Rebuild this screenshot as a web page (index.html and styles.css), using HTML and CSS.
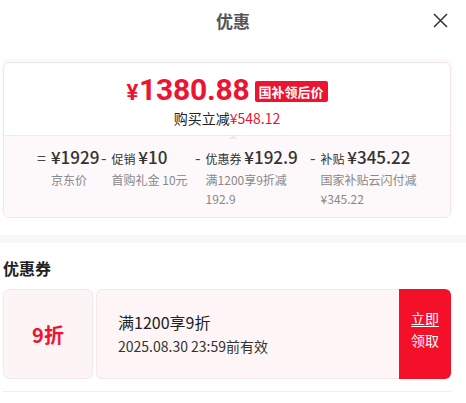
FILE: index.html
```html
<!DOCTYPE html>
<html lang="zh-CN">
  <head>
    <meta charset="UTF-8" />
    <meta name="viewport" content="width=device-width, initial-scale=1.0" />
    <title>优惠</title>
    <link rel="stylesheet" href="styles.css">
  </head>
  <body>
    <div class="header">
      <span></span>
      <h1 class="title">优惠</h1>
      <a href="javascript:;" class="close">
        <svg width="15" height="15" viewBox="0 0 15 15">
          <path d="M1 1 L14 14 M14 1 L1 14" stroke="#333" stroke-width="1.5" fill="none" />
        </svg>
      </a>
    </div>

    <div class="summary">
      <div class="card">
        <div class="card-top">
          <div class="price-row">
            <span class="price"><em>¥</em>1380.88</span>
            <span class="tag">国补领后价</span>
          </div>
          <p class="save">购买立减<span>¥548.12</span></p>
        </div>

        <div class="card-bottom">
          <div class="item">
            <span class="sign">=</span>
            <p class="head"><b>¥1929</b></p>
            <p class="sub">京东价</p>
          </div>
          <div class="item">
            <span class="sign">-</span>
            <p class="head">促销 <b>¥10</b></p>
            <p class="sub">首购礼金 10元</p>
          </div>
          <div class="item">
            <span class="sign">-</span>
            <p class="head">优惠券 <b>¥192.9</b></p>
            <p class="sub">满1200享9折减192.9</p>
          </div>
          <div class="item">
            <span class="sign">-</span>
            <p class="head">补贴 <b>¥345.22</b></p>
            <p class="sub">国家补贴云闪付减¥345.22</p>
          </div>
        </div>
      </div>
    </div>

    <div class="band"></div>

    <div class="coupons">
      <h2 class="sec-title">优惠券</h2>
      <div class="coupon">
        <div class="c-left">9折</div>
        <div class="c-mid">
          <p class="c-name">满1200享9折</p>
          <p class="c-time">2025.08.30 23:59前有效</p>
        </div>
        <a href="javascript:;" class="c-btn"><u>立即</u><br />领取</a>
      </div>
      <div class="line"></div>
    </div>
  </body>
</html>
```

FILE: styles.css
```css
* {
  margin: 0;
  padding: 0;
  box-sizing: border-box;
}

body {
  width: 466px;
  background: #fff;
  color: #222;
  font-family: "Noto Sans CJK SC", "Noto Sans", sans-serif;
}

.header {
  display: grid;
  grid-template-columns: 1fr auto 1fr;
  align-items: center;
  height: 40px;
}

.title {
  font-size: 17px;
  font-weight: bold;
  color: #555;
}

.close {
  justify-self: end;
  display: flex;
  margin-right: 18px;
}

.summary {
  padding: 22px 15px 17px 3px;
}

.card {
  border: 1px solid #f7e4e7;
  border-radius: 6px;
  overflow: hidden;
  box-shadow: 0 -2px 4px rgba(230, 240, 240, 0.5);
}

.card-top {
  padding: 13px 0 7px;
  text-align: center;
}

.price-row {
  display: flex;
  justify-content: center;
  align-items: center;
  gap: 5px;
  height: 30px;
}

.price {
  color: #ee1330;
  font-family: Roboto, "Noto Sans", sans-serif;
  font-size: 30px;
  font-weight: bold;
  line-height: 30px;
  letter-spacing: -0.2px;
}

.price em {
  font-style: normal;
  font-size: 22px;
  margin-right: 1px;
}

.tag {
  background: #ee1330;
  color: #fff;
  font-size: 13px;
  font-weight: bold;
  line-height: 21px;
  padding: 0 4px;
  border-radius: 2px;
}

.save {
  margin-top: 2px;
  font-size: 14px;
  line-height: 20px;
  color: #222;
}

.save span {
  color: #ee1330;
}

.card-bottom {
  position: relative;
  display: grid;
  grid-template-columns: 64px 94px 115px 1fr;
  padding: 10px 0 9px 33px;
  background: #fdf8f9;
  border-top: 1px solid #f6e8ea;
}

.card-bottom::before {
  content: "";
  position: absolute;
  top: -5px;
  left: 225px;
  border: 4px solid transparent;
  border-bottom-color: #f1e6e8;
}

.item {
  display: grid;
  grid-template-columns: auto 1fr;
  column-gap: 5px;
  align-content: start;
}

.sign {
  font-size: 16px;
  line-height: 22px;
  color: #444;
}

.head {
  font-size: 12px;
  line-height: 22px;
  color: #333;
  white-space: nowrap;
}

.head b {
  font-size: 17px;
  font-weight: 500;
  color: #333;
}

.sub {
  grid-column: 2;
  max-width: 97px;
  font-size: 12px;
  line-height: 19px;
  color: #888;
}

.band {
  height: 8px;
  background: #f7f7fa;
}

.coupons {
  padding: 13px 15px 0 3px;
}

.sec-title {
  font-size: 16px;
  font-weight: bold;
  line-height: 24px;
  color: #222;
}

.coupon {
  display: flex;
  height: 90px;
  margin-top: 9px;
}

.c-left {
  display: flex;
  justify-content: center;
  align-items: center;
  width: 90px;
  margin-right: 3px;
  background: #fdf4f6;
  border: 1px solid #f6e8ea;
  border-radius: 6px;
  color: #ee1330;
  font-size: 20px;
  font-weight: bold;
}

.c-mid {
  flex: 1;
  display: flex;
  flex-direction: column;
  justify-content: center;
  padding-left: 21px;
  background: #fdf5f6;
  border: 1px solid #f6e8ea;
  border-right: none;
  border-radius: 6px 0 0 6px;
}

.c-name {
  font-size: 16px;
  line-height: 24px;
  color: #222;
}

.c-time {
  font-size: 14px;
  line-height: 24px;
  color: #333;
}

.c-btn {
  display: block;
  width: 52px;
  padding-top: 18px;
  background: #f5102a;
  border-radius: 0 6px 6px 0;
  color: #fff;
  font-size: 14px;
  line-height: 22px;
  text-align: center;
  text-decoration: none;
}

.c-btn u {
  text-underline-offset: 2px;
}

.line {
  margin-top: 12px;
  border-top: 1px solid #eee;
}
```
